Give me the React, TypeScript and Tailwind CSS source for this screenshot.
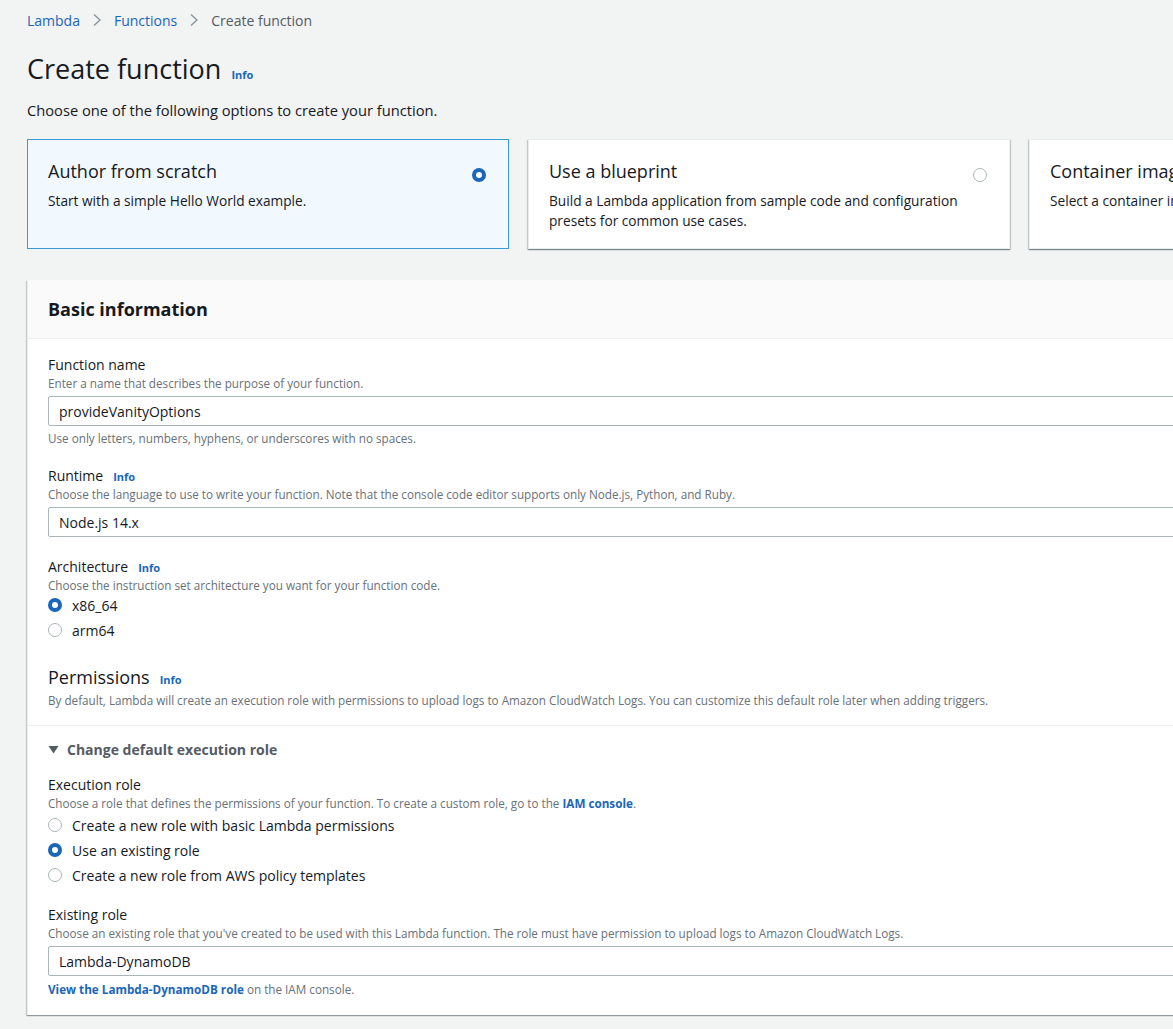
import React from "react";

const BLUE = "text-[#1a66b8]";

function Radio({ checked }: { checked?: boolean }) {
  return checked ? (
    <span className="inline-block w-[14px] h-[14px] rounded-full border-[4px] border-[#1a66b8] bg-white shrink-0" />
  ) : (
    <span className="inline-block w-[14px] h-[14px] rounded-full border border-[#aab7b8] bg-white shrink-0" />
  );
}

function Info() {
  return <span className={`text-[11px] leading-[16px] font-bold ${BLUE} ml-[10px]`}>Info</span>;
}

function Chevron() {
  return (
    <svg width="10" height="14" viewBox="0 0 10 14" className="mx-[12px]">
      <path d="M2 1.5 L8 7 L2 12.5" fill="none" stroke="#879196" strokeWidth="1.3" />
    </svg>
  );
}

function Card({
  title,
  desc,
  selected,
}: {
  title: string;
  desc: React.ReactNode;
  selected?: boolean;
}) {
  return (
    <div
      className={
        selected
          ? "w-[482px] h-[110px] shrink-0 border border-[#3a9ad6] bg-[#f1f8fe] px-5 pt-[19px] flex"
          : "w-[482px] h-[110px] shrink-0 border border-[#eaeded] bg-white px-5 pt-[19px] flex shadow-[0_1px_1px_0_rgba(0,28,36,0.3),1px_1px_1px_0_rgba(0,28,36,0.15),-1px_1px_1px_0_rgba(0,28,36,0.15)]"
      }
    >
      <div className="flex-1">
        <div className="text-[18px] leading-[24px] text-[#16191f]">{title}</div>
        <div className="text-[13.7px] leading-[20px] text-[#16191f] mt-[8px]">{desc}</div>
      </div>
      <div className="pt-[5px] pr-[2px]">
        <Radio checked={selected} />
      </div>
    </div>
  );
}

function Label({ children }: { children: React.ReactNode }) {
  return (
    <div className="h-[20px] text-[14px] leading-[20px] text-[#16191f] flex items-baseline overflow-visible">
      {children}
    </div>
  );
}
function Desc({ children }: { children: React.ReactNode }) {
  return <div className="text-[11.7px] leading-[16px] text-[#687078]">{children}</div>;
}
function Input({ value }: { value: string }) {
  return (
    <div className="h-[30px] border border-[#aab7b8] bg-white flex items-center px-[10px] text-[14px] text-[#16191f] mt-[5px] rounded-[2px]">
      {value}
    </div>
  );
}
function RadioRow({ label, checked }: { label: string; checked?: boolean }) {
  return (
    <div className="flex items-center h-[20px] gap-[10px] text-[14px] text-[#16191f]">
      <Radio checked={checked} />
      <span>{label}</span>
    </div>
  );
}

export default function App() {
  return (
    <div
      className="w-[1173px] min-h-[1029px] overflow-hidden bg-[#f2f3f3]"
      style={{ fontFamily: '"Open Sans", "Liberation Sans", Arial, sans-serif' }}
    >
      <div className="w-[1540px] pl-[27px]">
        {/* breadcrumb */}
        <div className="h-[40px] flex items-center text-[14px]">
          <span className={BLUE}>Lambda</span>
          <Chevron />
          <span className={BLUE}>Functions</span>
          <Chevron />
          <span className="text-[#545b64]">Create function</span>
        </div>

        {/* title */}
        <div className="flex items-baseline mt-[9px] h-[40px]">
          <h1 className="text-[27px] leading-[40px] text-[#16191f]">Create function</h1>
          <Info />
        </div>
        <div className="text-[14.7px] leading-[20px] text-[#16191f] mt-[11px]">
          Choose one of the following options to create your function.
        </div>

        {/* cards */}
        <div className="flex gap-[19px] mt-[19px]">
          <Card title="Author from scratch" desc="Start with a simple Hello World example." selected />
          <Card
            title="Use a blueprint"
            desc={
              <>
                Build a Lambda application from sample code and configuration
                <br />
                presets for common use cases.
              </>
            }
          />
          <Card title="Container image" desc="Select a container image to deploy for your function." />
        </div>

        {/* panel */}
        <div className="w-[1484px] mt-[31px] bg-white border-l border-[#eaeded] shadow-[0_1px_1px_0_rgba(0,28,36,0.3),-1px_1px_1px_0_rgba(0,28,36,0.15)]">
          <div className="h-[59px] bg-[#fafafa] border-b border-[#eaeded] flex items-center px-5">
            <h2 className="text-[18px] font-bold text-[#16191f]">Basic information</h2>
          </div>
          <div className="px-5 pt-[16px]">
            <Label>Function name</Label>
            <Desc>Enter a name that describes the purpose of your function.</Desc>
            <Input value="provideVanityOptions" />
            <div className="mt-[4px]">
              <Desc>Use only letters, numbers, hyphens, or underscores with no spaces.</Desc>
            </div>

            <div className="mt-[20px]">
              <Label>
                Runtime <Info />
              </Label>
              <Desc>
                Choose the language to use to write your function. Note that the console code editor supports only
                Node.js, Python, and Ruby.
              </Desc>
              <Input value="Node.js 14.x" />
            </div>

            <div className="mt-[20px]">
              <Label>
                Architecture <Info />
              </Label>
              <Desc>Choose the instruction set architecture you want for your function code.</Desc>
              <div className="mt-[2px] flex flex-col gap-[5px]">
                <RadioRow label="x86_64" checked />
                <RadioRow label="arm64" />
              </div>
            </div>

            <div className="mt-[26px]">
              <div className="h-[22px] text-[18px] leading-[22px] text-[#16191f] flex items-baseline">
                Permissions <Info />
              </div>
              <div className="mt-[4px]">
                <Desc>
                  By default, Lambda will create an execution role with permissions to upload logs to Amazon
                  CloudWatch Logs. You can customize this default role later when adding triggers.
                </Desc>
              </div>
            </div>
          </div>

          <div className="mt-[17px] border-t border-[#eaeded] px-5 pt-[13px] pb-[18px]">
            <div className="flex items-center h-[20px] text-[14px] font-bold text-[#545b64]">
              <svg width="11" height="9" viewBox="0 0 11 9" className="mr-[8px]">
                <path d="M0.5 1 L10.5 1 L5.5 8.5 Z" fill="#545b64" />
              </svg>
              Change default execution role
            </div>

            <div className="mt-[16px]">
              <Label>Execution role</Label>
              <Desc>
                Choose a role that defines the permissions of your function. To create a custom role, go to the{" "}
                <span className={`font-bold ${BLUE}`}>IAM console</span>.
              </Desc>
              <div className="mt-[4px] flex flex-col gap-[5px]">
                <RadioRow label="Create a new role with basic Lambda permissions" />
                <RadioRow label="Use an existing role" checked />
                <RadioRow label="Create a new role from AWS policy templates" />
              </div>
            </div>

            <div className="mt-[20px]">
              <Label>Existing role</Label>
              <Desc>
                Choose an existing role that you've created to be used with this Lambda function. The role must have
                permission to upload logs to Amazon CloudWatch Logs.
              </Desc>
              <Input value="Lambda-DynamoDB" />
              <div className="mt-[5px]">
                <Desc>
                  <span className={`font-bold ${BLUE}`}>View the Lambda-DynamoDB role</span> on the IAM console.
                </Desc>
              </div>
            </div>
          </div>
        </div>
        <div className="h-[20px]" />
      </div>
    </div>
  );
}
